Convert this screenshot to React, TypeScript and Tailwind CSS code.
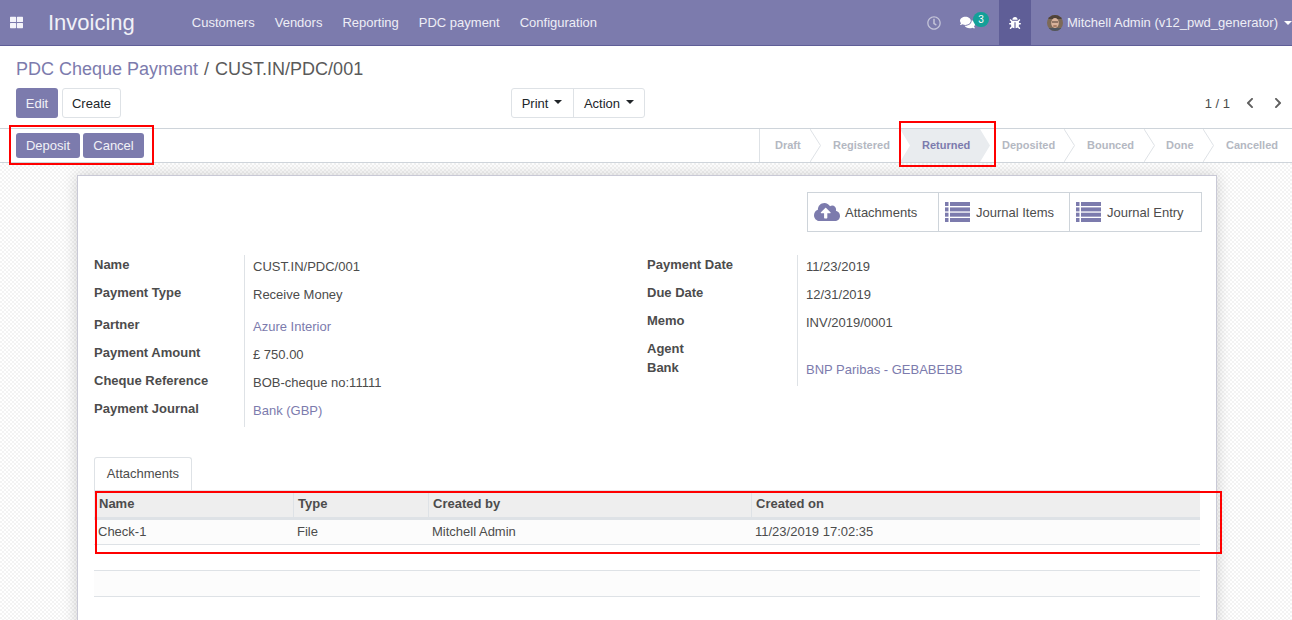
import React from "react";
import { FaThLarge, FaRegClock, FaComments, FaBug, FaCloudUploadAlt, FaChevronLeft, FaChevronRight } from "react-icons/fa";

const Caret = ({ className = "" }: { className?: string }) => (
  <span className={`inline-block w-0 h-0 border-x-[4px] border-x-transparent border-t-[4px] ${className}`} />
);

const Avatar = () => (
  <svg width="16" height="16" viewBox="0 0 16 16" className="shrink-0">
    <defs><clipPath id="av"><circle cx="8" cy="8" r="8" /></clipPath></defs>
    <g clipPath="url(#av)">
      <rect width="16" height="16" fill="#7d6a58" />
      <rect x="0" y="0" width="16" height="4" fill="#4f4238" />
      <ellipse cx="8" cy="8" rx="3.8" ry="5" fill="#d9b39b" />
      <rect x="5" y="6.5" width="6" height="1" fill="#4a3a33" />
      <rect x="0" y="13" width="16" height="3" fill="#4f5660" />
      <ellipse cx="8" cy="11" rx="2.2" ry="1" fill="#a67c64" />
    </g>
  </svg>
);

const ListIcon = () => (
  <svg width="25" height="20" viewBox="0 0 25 20" fill="#7c7bad" className="shrink-0">
    <rect x="0" y="0" width="3.5" height="4" />
    <rect x="5" y="0" width="20" height="4" />
    <rect x="0" y="5.4" width="3.5" height="4" />
    <rect x="5" y="5.4" width="20" height="4" />
    <rect x="0" y="10.7" width="3.5" height="4" />
    <rect x="5" y="10.7" width="20" height="4" />
    <rect x="0" y="16" width="3.5" height="4" />
    <rect x="5" y="16" width="20" height="4" />
  </svg>
);

const Nav = () => (
  <header className="h-[46px] shrink-0 bg-[#7c7bad] border-b border-[#5f5e97] flex items-center text-white text-[13px]">
    <FaThLarge className="ml-[10px] text-[13px] text-[#f4f4fa]" />
    <span className="ml-[25px] text-[22px] text-[#f1f1f7] leading-none">Invoicing</span>
    <nav className="ml-[57px] flex gap-[20px] text-[#eeeef6]">
      <span>Customers</span><span>Vendors</span><span>Reporting</span><span>PDC payment</span><span>Configuration</span>
    </nav>
    <div className="ml-auto flex items-center h-full">
      <FaRegClock className="text-[14px] text-[#c3c3d8]" />
      <div className="relative ml-[19px] mr-[11px] w-[28px] h-full flex items-center">
        <FaComments className="text-[15px] text-white" />
        <span className="absolute left-[13px] top-[12px] w-[16px] h-[15px] rounded-full bg-[#14a098] text-white text-[10px] flex items-center justify-center">3</span>
      </div>
      <div className="w-[32px] h-full bg-[#5f5e97] flex items-center justify-center"><FaBug className="text-[12px] text-white" /></div>
      <div className="ml-[16px] flex items-center gap-[4px] text-[#eeeef6]">
        <Avatar />
        <span>Mitchell Admin (v12_pwd_generator)</span>
        <Caret className="ml-[2px] border-t-white" />
      </div>
    </div>
  </header>
);

const ControlPanel = () => (
  <section className="shrink-0 h-[82px] bg-white px-4 flex flex-col">
    <div className="h-[42px] pt-[11px] text-[18px] leading-[24px] whitespace-nowrap">
      <span className="text-[#7c7bad]">PDC Cheque Payment</span>
      <span className="text-[#5a5a5a] ml-[6px]">/</span>
      <span className="text-[#5a5a5a] ml-[6px]">CUST.IN/PDC/001</span>
    </div>
    <div className="flex items-center h-[30px]">
      <div className="flex gap-[4px] w-[495px]">
        <button className="w-[42px] h-[30px] pt-[1px] rounded-[3px] bg-[#7c7bad] text-[#f1f1f7]">Edit</button>
        <button className="w-[59px] h-[30px] pt-[1px] rounded-[3px] bg-white border border-[#dee2e6] text-[#212529]">Create</button>
      </div>
      <div className="flex h-[30px] border border-[#dee2e6] rounded-[3px] text-[#212529]">
        <button className="w-[62px] pt-[1px] pr-[1px] flex items-center justify-center gap-[6px] border-r border-[#dee2e6]">Print <Caret className="border-t-[#212529] -mt-[3px]" /></button>
        <button className="w-[70px] pt-[1px] flex items-center justify-center gap-[6px]">Action <Caret className="border-t-[#212529] -mt-[3px]" /></button>
      </div>
      <div className="ml-auto -mr-[8px] flex items-center text-[#4c4c4c]">
        <span className="pt-[1px]">1 / 1</span>
        <FaChevronLeft className="ml-[14px] text-[12px] text-[#5f5f5f]" />
        <FaChevronRight className="ml-[16px] text-[12px] text-[#5f5f5f]" />
      </div>
    </div>
  </section>
);

const steps: { t: string; w: string; pl: string; active?: boolean }[] = [
  { t: "Draft", w: "w-[50px]", pl: "pl-[15px]" },
  { t: "Registered", w: "w-[91px]", pl: "pl-[23px]" },
  { t: "Returned", w: "w-[79px]", pl: "pl-[21px]", active: true },
  { t: "Deposited", w: "w-[84px]", pl: "pl-[22px]" },
  { t: "Bounced", w: "w-[80px]", pl: "pl-[23px]" },
  { t: "Done", w: "w-[59px]", pl: "pl-[22px]" },
  { t: "Cancelled", w: "w-[89px]", pl: "pl-[23px]" },
];

const StatusRow = () => (
  <section className="shrink-0 h-[35px] bg-white border-y border-[#ced4da] flex items-center justify-between pl-4">
    <div className="flex gap-[3px]">
      <button className="w-[64px] h-[25px] rounded-[3px] bg-[#7c7bad] text-[#f1f1f7]">Deposit</button>
      <button className="w-[61px] h-[25px] rounded-[3px] bg-[#7c7bad] text-[#f1f1f7]">Cancel</button>
    </div>
    <div className="flex h-full border-l border-[#dee2e6] text-[11px] font-bold">
      {steps.map((s, i) => (
        <div key={s.t} className={`relative h-full flex items-center ${s.w} ${s.pl} ${s.active ? "text-[#7c7bad]" : "text-[#b4b8c2]"}`}>
          {s.active && <span className="absolute -left-[1px] top-0 bottom-0 w-[91px] bg-[#e9ecef] [clip-path:polygon(0_0,80px_0,90px_50%,80px_100%,0_100%,10px_50%)]" />}
          <span className="relative">{s.t}</span>
          {i < steps.length - 1 && !s.active && !steps[i + 1].active && (
            <svg width="11" height="33" viewBox="0 0 11 33" className="absolute left-full top-0 z-10 pointer-events-none" fill="none">
              <path d="M0 0 L10.5 16.5 L0 33" stroke="#dee2e6" />
            </svg>
          )}
        </div>
      ))}
    </div>
  </section>
);

const StatBtn = ({ icon, label }: { icon: React.ReactNode; label: string }) => (
  <div className="w-[131px] h-full flex items-center pl-[6px] border-r border-[#ced4da] last:border-r-0 text-[#4c4c4c]">
    <span className="w-[31px] text-[#7c7bad] flex items-center">{icon}</span>
    <span className="pt-[1px]">{label}</span>
  </div>
);

const Field = ({ label, value, link, row }: { label: string; value?: string; link?: boolean; row: string }) => (
  <div className={`flex ${row}`}>
    <div className="w-[150px] font-bold text-[#4c4c4c] leading-[20px]">{label}</div>
    <div className={`flex-1 border-l border-[#dee2e6] pl-[8px] pt-[2px] leading-[20px] ${link ? "text-[#7c7bad]" : "text-[#4c4c4c]"}`}>{value}</div>
  </div>
);

const Sheet = () => (
  <article className="ml-[77px] mt-[12px] w-[1140px] h-[600px] bg-white border border-[#c9c9d6] shadow-[0_0_14px_rgba(0,0,0,0.18)] px-[16px] pt-[16px]">
    <div className="flex justify-end -mr-[2px]">
      <div className="flex h-[40px] border border-[#ced4da]">
        <StatBtn icon={<FaCloudUploadAlt className="text-[26px]" />} label="Attachments" />
        <StatBtn icon={<ListIcon />} label="Journal Items" />
        <StatBtn icon={<ListIcon />} label="Journal Entry" />
      </div>
    </div>
    <div className="mt-[23px] flex">
      <div className="w-[553px]">
        <div className="w-[523px]">
          <Field label="Name" value="CUST.IN/PDC/001" row="h-[28px]" />
          <Field label="Payment Type" value="Receive Money" row="h-[32px]" />
          <Field label="Partner" value="Azure Interior" link row="h-[28px]" />
          <Field label="Payment Amount" value="£ 750.00" row="h-[28px]" />
          <Field label="Cheque Reference" value="BOB-cheque no:11111" row="h-[28px]" />
          <Field label="Payment Journal" value="Bank (GBP)" link row="h-[28px]" />
        </div>
      </div>
      <div className="w-[553px]">
        <Field label="Payment Date" value="11/23/2019" row="h-[28px]" />
        <Field label="Due Date" value="12/31/2019" row="h-[28px]" />
        <Field label="Memo" value="INV/2019/0001" row="h-[28px]" />
        <Field label="Agent" row="h-[19px]" />
        <div className="flex h-[28px]">
          <div className="w-[150px] font-bold text-[#4c4c4c] leading-[20px]">Bank</div>
          <div className="flex-1 border-l border-[#dee2e6] pl-[8px] pt-[2px] leading-[20px] text-[#7c7bad]">BNP Paribas - GEBABEBB</div>
        </div>
      </div>
    </div>
    <div className="mt-[30px] h-[33px] flex items-end">
      <div className="w-[98px] h-[33px] border border-b-0 border-[#dee2e6] rounded-t-[3px] bg-white flex items-center justify-center text-[#4c4c4c]">Attachments</div>
    </div>
    <div className="border-t-[3px] border-[#dee2e6]">
      <div className="h-[24px] bg-[#eeeeee] grid grid-cols-[200px_135px_323px_1fr] font-bold text-[#4c4c4c] leading-[21px]">
        <div className="pl-[5px] border-r border-[#dee2e6]">Name</div>
        <div className="pl-[4px] border-r border-[#dee2e6]">Type</div>
        <div className="pl-[4px] border-r border-[#dee2e6]">Created by</div>
        <div className="pl-[4px]">Created on</div>
      </div>
      <div className="h-[3px] bg-[#dee2e6]" />
      <div className="h-[25px] bg-[#fcfcfc] border-b border-[#dee2e6] grid grid-cols-[200px_135px_323px_1fr] text-[#4c4c4c] leading-[23px]">
        <div className="pl-[4px]">Check-1</div>
        <div className="pl-[3px]">File</div>
        <div className="pl-[3px]">Mitchell Admin</div>
        <div className="pl-[3px]">11/23/2019 17:02:35</div>
      </div>
      <div className="mt-[25px] h-[27px] bg-[#fcfcfc] border-y border-[#dee2e6]" />
    </div>
  </article>
);

const RedBox = ({ className }: { className: string }) => (
  <div className={`absolute border-2 border-[#ff0000] pointer-events-none z-20 ${className}`} />
);

export default function App() {
  return (
    <div className="relative w-[1292px] h-[620px] overflow-hidden flex flex-col bg-white text-[13px] font-['Liberation_Sans',Arial,sans-serif]">
      <Nav />
      <ControlPanel />
      <StatusRow />
      <main className="flex-1 min-h-0 overflow-hidden bg-[repeating-conic-gradient(#f3f3f3_0%_25%,#ffffff_0%_50%)] bg-[length:4px_4px]">
        <Sheet />
      </main>
      <RedBox className="left-[9px] top-[125px] w-[145px] h-[40px]" />
      <RedBox className="left-[899px] top-[121px] w-[97px] h-[46px]" />
      <RedBox className="left-[95px] top-[491px] w-[1127px] h-[63px]" />
    </div>
  );
}
